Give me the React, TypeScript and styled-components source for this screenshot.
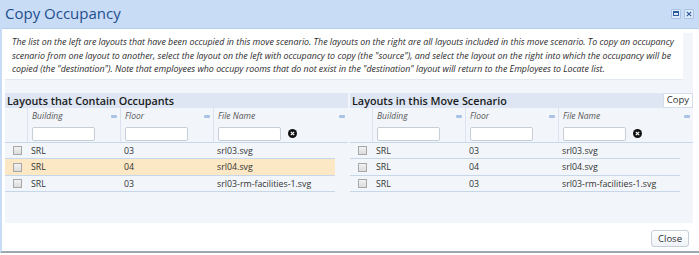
import React from "react";
import styled, { createGlobalStyle } from "styled-components";

const GlobalStyle = createGlobalStyle`
  html, body {
    margin: 0;
    padding: 0;
    background: #ffffff;
  }
  body {
    font-family: "Open Sans", "DejaVu Sans", sans-serif;
    color: #333333;
  }
`;

const Dialog = styled.div`
  width: 699px;
  height: 253px;
  box-sizing: border-box;
  border-left: 2px solid #c9dcf5;
  border-bottom: 2px solid #9ea6ae;
  display: flex;
  flex-direction: column;
  background: #ffffff;
`;

const TitleBar = styled.div`
  height: 29px;
  flex: none;
  background: #c9dcf5;
  border-bottom: 1px solid #b7cde9;
  box-sizing: border-box;
  display: flex;
  align-items: center;
  justify-content: space-between;
  padding: 0 5px 0 3px;
`;

const Title = styled.div`
  font-size: 15px;
  color: #1d4e8f;
  margin-top: -2px;
`;

const WinButtons = styled.div`
  display: flex;
  gap: 3px;
  margin-top: -1px;
`;

const WinButton = styled.div`
  width: 8px;
  height: 8px;
  border: 1px solid #a9c1e2;
  background: #dfeafa;
  border-radius: 1px;
  display: flex;
  align-items: center;
  justify-content: center;
`;

const Content = styled.div`
  flex: 1;
  display: flex;
  flex-direction: column;
  padding: 4px 6px 0 3px;
`;

const Panel = styled.div`
  background: #f2f6fa;
  height: 190px;
  display: flex;
  flex-direction: column;
`;

const Description = styled.div`
  background: #ffffff;
  border-bottom: 1px solid #e3e9f1;
  width: 678px;
  box-sizing: border-box;
  padding: 3px 0 2px 7px;
  font-style: italic;
  font-size: 8.85px;
  line-height: 13.6px;
  color: #2b2b2b;
  white-space: nowrap;
`;

const Grids = styled.div`
  display: flex;
  gap: 2px;
  margin-top: 13px;
`;

const Grid = styled.div`
  width: 343px;
  display: flex;
  flex-direction: column;
`;

const GridHeader = styled.div`
  height: 15px;
  background: #dde6f2;
  display: flex;
  align-items: center;
  justify-content: space-between;
  padding-left: 2px;
  font-size: 10.8px;
  font-weight: 600;
  color: #1a1a1a;
`;

const SmallButton = styled.button`
  font-family: "Open Sans", "DejaVu Sans", sans-serif;
  font-size: 9.5px;
  color: #333;
  height: 15px;
  padding: 0 3px;
  background: #ffffff;
  border: 1px solid #d5dde8;
  border-radius: 2px;
  line-height: 12px;
`;

const ColHeadRow = styled.div`
  display: grid;
  grid-template-columns: 22px 93px 93px 135px;
  height: 35px;
  background: #f2f6fa;
  border-bottom: 1px solid #c7d7ea;
  box-sizing: border-box;
`;

const ColHead = styled.div<{ $first?: boolean }>`
  position: relative;
  border-left: ${(p) => (p.$first ? "none" : "1px solid #dbe3ee")};
  padding: 2px 0 0 4px;
  display: flex;
  flex-direction: column;
  gap: 6px;
`;

const ColLabel = styled.div`
  font-size: 8.5px;
  font-style: italic;
  color: #555;
  line-height: 11px;
`;

const MinusIcon = styled.span`
  position: absolute;
  right: 3px;
  top: 7px;
  width: 6px;
  height: 3px;
  border-radius: 1px;
  background: #a9c3e6;
`;

const FilterLine = styled.div`
  display: flex;
  align-items: center;
  gap: 7px;
`;

const FilterInput = styled.input`
  width: 63px;
  height: 14px;
  box-sizing: border-box;
  border: 1px solid #c6ced8;
  border-radius: 2px;
  background: #fff;
  padding: 0;
  margin: 0;
`;

const ClearIcon = styled.span`
  width: 9px;
  height: 9px;
  border-radius: 50%;
  background: #111;
  display: flex;
  align-items: center;
  justify-content: center;
`;

const Row = styled.div<{ $selected?: boolean }>`
  display: grid;
  grid-template-columns: 22px 93px 93px 122px;
  width: 330px;
  height: 16.5px;
  align-items: center;
  background: ${(p) => (p.$selected ? "#fde8c5" : "transparent")};
  border-bottom: 1px solid #c7d7ea;
  box-sizing: border-box;
  font-size: 8.8px;
  color: #333;
`;

const Cell = styled.div`
  padding-left: 4px;
  white-space: nowrap;
`;

const CheckBox = styled.span`
  display: block;
  width: 9px;
  height: 9px;
  margin-left: 8px;
  border: 1px solid #a7a7a7;
  background: linear-gradient(#f2f2f2, #dcdcdc);
  box-sizing: border-box;
`;

const Footer = styled.div`
  display: flex;
  justify-content: flex-end;
  padding: 7px 4px 0 0;
`;

const CloseButton = styled.button`
  font-family: "Open Sans", "DejaVu Sans", sans-serif;
  font-size: 9.5px;
  color: #333;
  width: 38px;
  height: 17px;
  background: linear-gradient(#ffffff, #eef2f7);
  border: 1px solid #c5ced9;
  border-radius: 3px;
  padding: 0;
`;

type Layout = { bl: string; fl: string; file: string };

const rows: Layout[] = [
  { bl: "SRL", fl: "03", file: "srl03.svg" },
  { bl: "SRL", fl: "04", file: "srl04.svg" },
  { bl: "SRL", fl: "03", file: "srl03-rm-facilities-1.svg" },
];

function LayoutGrid(props: { title: string; selected?: number; copy?: boolean }) {
  return (
    <Grid>
      <GridHeader>
        <span>{props.title}</span>
        {props.copy && <SmallButton>Copy</SmallButton>}
      </GridHeader>
      <ColHeadRow>
        <ColHead $first />
        <ColHead>
          <ColLabel>Building</ColLabel>
          <FilterInput />
          <MinusIcon />
        </ColHead>
        <ColHead>
          <ColLabel>Floor</ColLabel>
          <FilterInput />
          <MinusIcon />
        </ColHead>
        <ColHead>
          <ColLabel>File Name</ColLabel>
          <FilterLine>
            <FilterInput />
            <ClearIcon>
              <svg width="5" height="5" viewBox="0 0 5 5">
                <path d="M0.8 0.8 L4.2 4.2 M4.2 0.8 L0.8 4.2" stroke="#fff" strokeWidth="1.2" />
              </svg>
            </ClearIcon>
          </FilterLine>
          <MinusIcon />
        </ColHead>
      </ColHeadRow>
      {rows.map((r, i) => (
        <Row key={i} $selected={props.selected === i}>
          <CheckBox />
          <Cell>{r.bl}</Cell>
          <Cell>{r.fl}</Cell>
          <Cell>{r.file}</Cell>
        </Row>
      ))}
    </Grid>
  );
}

export default function App() {
  return (
    <>
      <GlobalStyle />
      <Dialog>
        <TitleBar>
          <Title>Copy Occupancy</Title>
          <WinButtons>
            <WinButton>
              <svg width="6" height="5" viewBox="0 0 6 5">
                <rect x="0.5" y="0.5" width="5" height="4" fill="none" stroke="#2c5a9a" />
                <rect x="0.5" y="0.5" width="5" height="1.5" fill="#2c5a9a" />
              </svg>
            </WinButton>
            <WinButton>
              <svg width="6" height="6" viewBox="0 0 6 6">
                <path d="M0.8 0.8 L5.2 5.2 M5.2 0.8 L0.8 5.2" stroke="#2c5a9a" strokeWidth="1.2" />
              </svg>
            </WinButton>
          </WinButtons>
        </TitleBar>
        <Content>
          <Panel>
            <Description>
              The list on the left are layouts that have been occupied in this move scenario. The layouts on the right are all layouts included in this move scenario. To copy an occupancy
              <br />
              scenario from one layout to another, select the layout on the left with occupancy to copy (the "source"), and select the layout on the right into which the occupancy will be
              <br />
              copied (the "destination"). Note that employees who occupy rooms that do not exist in the "destination" layout will return to the Employees to Locate list.
            </Description>
            <Grids>
              <LayoutGrid title="Layouts that Contain Occupants" selected={1} />
              <LayoutGrid title="Layouts in this Move Scenario" copy />
            </Grids>
          </Panel>
          <Footer>
            <CloseButton>Close</CloseButton>
          </Footer>
        </Content>
      </Dialog>
    </>
  );
}
